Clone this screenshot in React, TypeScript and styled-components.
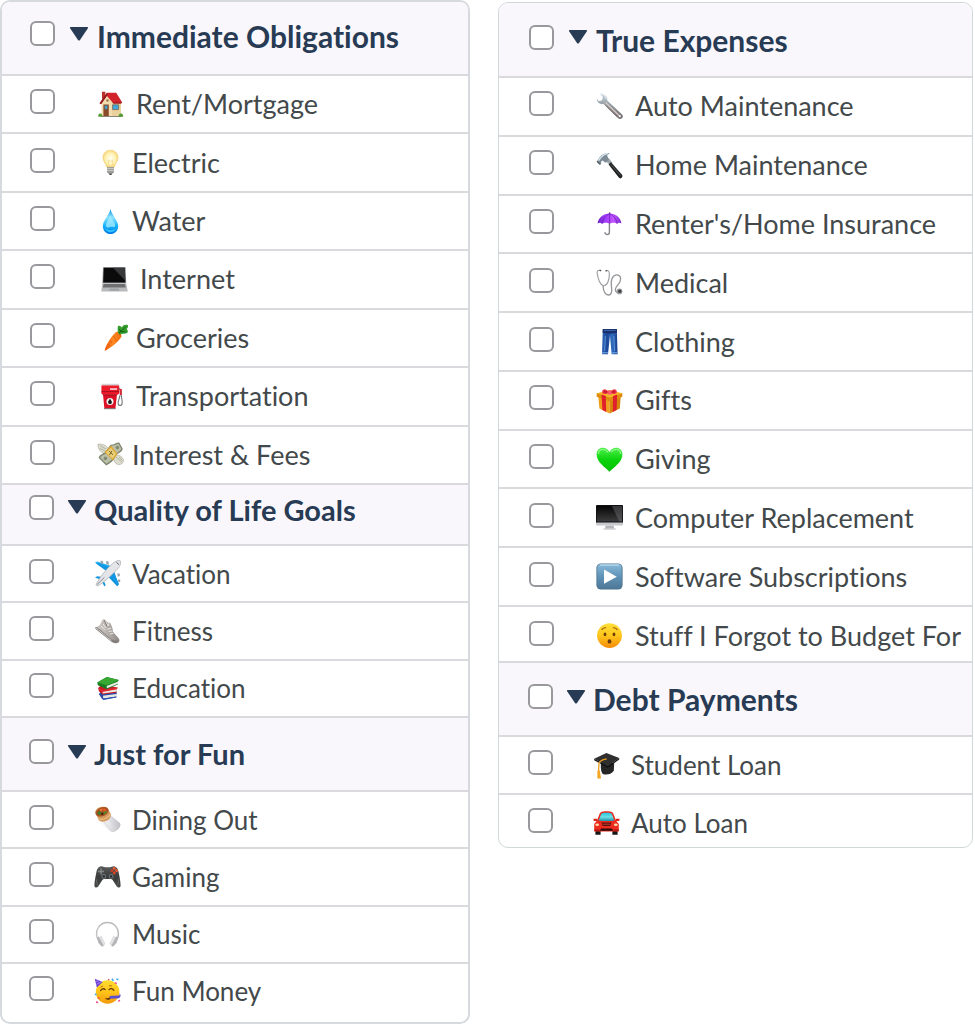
import React, { useId, useState } from "react";
import styled, { createGlobalStyle, css } from "styled-components";

const GlobalStyle = createGlobalStyle`
  *, *::before, *::after { box-sizing: border-box; }
  body {
    margin: 0;
    background: #ffffff;
    font-family: Lato, "Liberation Sans", sans-serif;
    font-variant-ligatures: none;
  }
`;

const Board = styled.main`
  display: grid;
  grid-template-columns: minmax(0, 470fr) minmax(0, 475fr);
  column-gap: 28px;
  align-items: start;
  padding-right: 2px;
`;

const Panel = styled.section<{ $offset?: boolean }>`
  overflow: hidden;
  padding-bottom: 3px;
  border: 2px solid #d6dadf;
  border-radius: 10px;
  background: #ffffff;
  ${(p) =>
    p.$offset &&
    css`
      margin-top: 2px;
      padding-bottom: 0;
      border-width: 1px;
      border-color: #d0d8da;
    `}
`;

const GroupHeader = styled.header<{ $height: number; $inset: number; $lift: number }>`
  display: flex;
  align-items: center;
  min-height: ${(p) => p.$height}px;
  padding: 0 8px ${(p) => p.$lift}px ${(p) => p.$inset}px;
  background: #f9f7fb;
`;

const CheckBox = styled.input`
  appearance: none;
  flex: none;
  width: 25px;
  height: 25px;
  margin: 0 0 5px;
  border: 2px solid #98989d;
  border-radius: 6px;
  background: #ffffff;
  cursor: pointer;

  &:checked {
    border-color: #283b54;
    background: #283b54;
    box-shadow: inset 0 0 0 4px #ffffff;
  }
`;

const Toggle = styled.button<{ $open: boolean; $compact?: boolean }>`
  flex: none;
  display: flex;
  margin: ${(p) => (p.$compact ? "0 7px 5px 13px" : "0 8px 5px 14px")};
  padding: 0;
  border: 0;
  background: none;
  cursor: pointer;

  svg {
    display: block;
    transform: rotate(${(p) => (p.$open ? 0 : -90)}deg);
  }
`;

const GroupTitle = styled.h2<{ $size: number }>`
  margin: 0;
  color: #283b54;
  font-size: ${(p) => p.$size}px;
  line-height: 36px;
  font-weight: 700;
  white-space: nowrap;
`;

const CategoryRow = styled.li<{ $inset: number }>`
  flex: 1;
  display: flex;
  align-items: center;
  padding-left: ${(p) => p.$inset}px;
  border-top: 2px solid #d9d9de;
`;

const Categories = styled.ul<{ $height: number; $tail?: number }>`
  display: flex;
  flex-direction: column;
  min-height: ${(p) => p.$height}px;
  margin: 0;
  padding: 0;
  list-style: none;

  & + header {
    border-top: 2px solid #d9d9de;
  }

  ${(p) =>
    p.$tail &&
    css`
      ${CategoryRow}:last-child {
        flex: none;
        min-height: ${p.$tail}px;
        padding-top: 3px;
      }
    `}
`;

const CategoryLabel = styled.label<{ $start: number; $gap: number; $size: number }>`
  display: flex;
  align-items: center;
  gap: ${(p) => p.$gap}px;
  padding-left: ${(p) => p.$start}px;
  color: #43494b;
  font-size: ${(p) => p.$size}px;
  line-height: 32px;
  white-space: nowrap;
  cursor: pointer;
`;

const Picture = styled.svg`
  flex: none;
  display: block;
  width: 27px;
  height: 27px;
`;

/* Gradients shared by the pictures, defined once for the page. */
const Defs = styled.svg`
  display: block;
  width: 0;
  height: 0;
`;

const Grad = ({ id, stops, flat }: { id: string; stops: string[]; flat?: boolean }) => (
  <linearGradient id={id} x1="0" y1="0" x2={flat ? "1" : "0"} y2={flat ? "0" : "1"}>
    {stops.map((c, i) => (
      <stop key={i} offset={i / (stops.length - 1)} stopColor={c} />
    ))}
  </linearGradient>
);

const Gradients = () => (
  <Defs aria-hidden="true">
    <defs>
      <Grad id="g-drop" stops={["#0b8fe0", "#8fe4ff", "#18b4fb", "#0079e8"]} />
      <Grad id="g-screen" stops={["#050505", "#3c3c3e"]} />
      <Grad id="g-steel" stops={["#c9d6df", "#8d969c", "#6f6668"]} />
      <Grad id="g-umbrella" flat stops={["#6a22c4", "#a63cff", "#c455ff", "#7a28d0"]} />
      <Grad id="g-jeans" flat stops={["#2a62b5", "#1c4798", "#2f6cc0", "#173c88"]} />
      <Grad id="g-heart" stops={["#4df04a", "#0bd30d", "#00c000"]} />
      <Grad id="g-play" stops={["#8bbad8", "#5f93b8", "#4f7896"]} />
      <Grad id="g-face" stops={["#ffe03a", "#ffc61c", "#f58a06"]} />
      <Grad id="g-party" stops={["#ffdc30", "#ffc41a", "#f39a0a"]} />
      <Grad id="g-foil" flat stops={["#ffffff", "#e9e9ec", "#bcbcc2"]} />
      <Grad id="g-glass" stops={["#20c5de", "#6fe0e6", "#1794ae"]} />
      <Grad id="g-carrot" flat stops={["#f0560a", "#ff8a24", "#f26a0c"]} />
      <Grad id="g-shoe" flat stops={["#d3cfcc", "#b6b0ac", "#8d8682"]} />
      <Grad id="g-pad" stops={["#5a5c5b", "#3a3c3c", "#484a49"]} />
      <Grad id="g-plane" stops={["#27b4f2", "#0a86d4"]} />
      <radialGradient id="g-bulb" cx="0.5" cy="0.5" r="0.55">
        <stop offset="0" stopColor="#fffef2" />
        <stop offset="0.6" stopColor="#fff2b4" />
        <stop offset="1" stopColor="#f5cf6a" />
      </radialGradient>
    </defs>
  </Defs>
);

const pictures: Record<string, React.ReactNode> = {
  house: (
    <>
      <path d="M5 0.8h3.4v7H5z" fill="#b8322c" />
      <path d="M4.5 12 10 5l6-2 8 9v13H4.5z" fill="#f3dcae" />
      <path d="M15 10h8.8v15H15z" fill="#ead09c" />
      <path d="M2.6 12.2 10 1.8h9.2l6 9.6-1.2 1.2h-7.6L10 5 4 13.2z" fill="#d3232a" />
      <path d="M2.6 12.2 10 1.8l1 1.2L4 13.2zM16.4 12.6h7.6l1.2-1.2h-9.6z" fill="#8e1b20" />
      <path d="M6.4 13.4h5.4v11.8H6.4z" fill="#8a4a2a" />
      <path d="M7.6 14.6h3v3.6h-3zM15.6 13.8h6v4.8h-6z" fill="#43a7df" stroke="#6d5a48" strokeWidth="0.7" />
      <path d="M9.5 8.5h2v2h-2z" fill="#8a5a3a" />
      <path d="M4 25h20.5v0.9H4z" fill="#8a8378" />
      <path d="M1.2 25.8q0-3.4 2.2-3.2 2 .2 2 3.2zM21.6 25.8q.2-3.6 2.4-3.2 2.2 0 2.2 3.2z" fill="#559a35" />
    </>
  ),
  bulb: (
    <>
      <path d="M13.5 1.2c-4.4 0-7.5 3.2-7.5 7.4 0 3.8 2.8 5.6 3.6 9.4h7.8c.8-3.8 3.6-5.6 3.6-9.4 0-4.2-3.1-7.4-7.5-7.4z" fill="url(#g-bulb)" stroke="#f2d27c" strokeWidth="0.8" />
      <path d="M11.5 17.5V11l2 1.5 2-1.5v6.5" fill="none" stroke="#f0d88e" strokeWidth="0.7" />
      <path d="M10 18h7v5.2l-1.6 1.6h-3.800L10 23.2z" fill="#9b9b98" />
      <path d="M10 19.4h7M10 21.4h7" stroke="#d9d9d5" strokeWidth="0.8" />
      <path d="M12 24.4h3l-.6 1.6h-1.8z" fill="#454545" />
    </>
  ),
  drop: (
    <>
      <path d="M13.5 1C12.4 7 5.8 12.2 5.8 18.2c0 4.4 3.4 7.8 7.7 7.8s7.7-3.4 7.7-7.8C21.2 12.2 14.6 7 13.5 1z" fill="url(#g-drop)" />
      <path d="M13.4 7c-.8 4-4.4 7.4-4.4 10.4 0 1.8 1.6 2.4 3.4 1.8 2.4-.8 3.8.2 5.4-.4 1.8-3-3.6-7-4.4-11.8z" fill="#a9ecff" opacity="0.75" />
      <path d="M8 19.5c.6 3 3 4.7 5.6 4.7 2.8 0 5-1.8 5.4-4.7-1.6 3.4-9 3.6-11 0z" fill="#35c4ff" />
    </>
  ),
  laptop: (
    <>
      <path d="M2 1.2h22.6l.6 16H1.4z" fill="#8b8d90" />
      <path d="M2.8 1.8h21l.5 14.6H2.2z" fill="#0b0b0c" />
      <path d="M12 1.8h11.8l.5 13z" fill="#38393b" />
      <path d="M1.4 17.2h23.8l1.600 8.400H.200z" fill="#b9babc" />
      <path d="M2.6 18h21.4l.7 3.6H1.9z" fill="#6e7072" />
      <path d="M8.8 22.4h9l.4 2.4H8.4z" fill="#9fa1a3" />
    </>
  ),
  carrot: (
    <>
      <path d="M16.4 7.6c2.4.4 4.4 2.6 4 5.2-2.4 4.6-10.8 11.2-15.6 13.6-.8.2-1.4-.2-1-1C6 19.6 11.6 9.6 16.4 7.6z" fill="url(#g-carrot)" />
      <path d="M12 12.4l2.2 1.6M9 17l2 1.4M15.5 16.6l-1.6-1.4M7.2 20.6l1.4 1M18 10l1.4 1" stroke="#c94c06" strokeWidth="0.7" />
      <path d="M17 8.8c-.2-2.4-.6-5 0-6.8 1.6-.8 3 .2 3.8 1.4C22 1 24.4.4 26.6 1c1 1.2.4 3-1 4 1.4 1 1.6 2.6.6 4-2 .8-5.6.8-7.6 1.6z" fill="#349d2e" />
      <path d="M18 9l6.6-6M18.4 5l1.4 2.6 4.6.2" fill="none" stroke="#14620f" strokeWidth="1" />
    </>
  ),
  pump: (
    <>
      <path d="M4.8 0.8h17v2.400h-17z" fill="#d6d2d2" />
      <path d="M4.400 2.400h17.8v8l-1.4 1.4H5.6l-1.2-1.4z" fill="#ee1b2b" />
      <path d="M6 11.6h14l-1.600 14.2H7.4z" fill="#db1225" />
      <path d="M4.6 8.600h17.400M6.2 12h13.4" stroke="#8f0c18" strokeWidth="0.8" />
      <path d="M13 5.400h7v1.300h-7z" fill="#ffffff" />
      <circle cx="13" cy="18.4" r="3.5" fill="#f4f4f4" />
      <path d="M13 15.4c-.5 1.6-1.9 2.2-1.9 3.8a1.9 1.9 0 0 0 3.8 0c0-1.6-1.4-2.2-1.9-3.8z" fill="#191919" />
      <path d="M21.6 5.4c3 0 2.4 4.2 2.6 6.6.3 4 1.6 6.4.8 9-.6 2-3.2 2-3.8 0-.8-2.6 1.4-4.6 1.6-8.6" fill="none" stroke="#737577" strokeWidth="1.1" />
      <path d="M22.4 6h2.4v6h-2z" fill="#d9283a" />
      <path d="M7 25.2h11.6v1H7z" fill="#777777" />
    </>
  ),
  money: (
    <>
      <path d="M.8 3.2c4-.6 8.4.8 11 4.6l-3.6 5C4.4 12 1.2 9.4.8 3.2z" fill="#dcdccf" stroke="#a9aa98" strokeWidth="0.6" />
      <path d="M17.2 14.4c4-1 8.2.4 9.4 5-.4 2.6-2 4.2-5.2 4.2-3.2-.6-5.6-4-4.2-9.2z" fill="#dcdccf" stroke="#a9aa98" strokeWidth="0.6" />
      <path d="M3 4.6 9 8M2.6 7.2l5.8 3M19 16l5.8 5M22 16l3.4 3.4" stroke="#a3a493" strokeWidth="0.7" />
      <path d="M13.4 3.8c3.4.4 5.4-2.4 8.8-2.2l3.6 6.2c-1 4-5.4 4.2-7.2 7.4-1.6 4-4.6 6.6-9.4 9.4L1.6 16.8c1-3.4 4-3.6 6.8-5.8z" fill="#7e8570" />
      <path d="M14.4 4.8c2.8.2 4.8-2 7.2-1.8l2.8 4.8c-1.2 2.8-4.6 3.4-6.4 6.2-1.6 3.8-4.4 6.2-8.6 8.8L3.2 16.6c1-2.2 3.6-2.6 6-4.4z" fill="#bcc0a9" />
      <path d="M7.4 11.2 14 4.6l6.6 8.2-4.6 6.6z" fill="#dba83a" />
      <path d="M9 11.8l5-5 5 6-3.4 4.6z" fill="#e8cf7a" />
      <path d="M12.2 10.2l3.8 3.6M15 9.8l-2.6 4.2" stroke="#7b6328" strokeWidth="1" />
      <circle cx="20.4" cy="6.6" r="1.8" fill="#828a72" />
      <circle cx="8.4" cy="17.4" r="1.8" fill="#828a72" />
    </>
  ),
  plane: (
    <>
      <path d="M1 2.8 3 1.4l16 5-4.2 5zM19.8 13.2l5.2 11-1.8 2-8.6-9z" fill="url(#g-plane)" />
      <path d="M5 3.200l13 5-4 4-12-8.600zM20.400 12l4 11.600-1.600 1.600-7-11z" fill="#1297e4" />
      <path d="M1 17.600l2.200-1.400 8 1-2.200 3.400zM8.600 18l3 7-1.200 1.600-3.400-6.600z" fill="#1496df" />
      <path d="M6.6.6l2.4.6.2 2.6-2.6-.6zM12.2 1l2.4.6.2 3.2-2.6-.8zM25.8 13.4l-2.6.2.6 3.2 2-.8zM26.2 19.4l-2.4.2.6 2.8 1.8-.6z" fill="#9aa2a8" />
      <path d="M26.2.8c1.2 3-.4 6.2-4 9.600C16 16.600 8 24 3.400 26 2.200 26 1.800 25 2.600 23.400 5 18.600 11.600 9.800 17.400 4.600 20.800 1.600 23.800-.2 26.200.800z" fill="#e3e5e8" stroke="#a4a8ad" strokeWidth="0.7" />
      <path d="M22.4 2.2l2.6 2.4" stroke="#54616c" strokeWidth="1" />
      <path d="M3 24.6l7.4-7.2" stroke="#7c8186" strokeWidth="0.9" />
    </>
  ),
  shoe: (
    <>
      <path d="M2 10.4 6 7.8 8.4 3c.6-1 1.4-1 2.2-.4l4 3.4 1.4-.6c1.6 3.2 2.6 5 3.2 9.6l5.2 6c1.2 1.4 1.4 3 .4 4.2-1.6.8-4 .2-6-1.2z" fill="url(#g-shoe)" />
      <path d="M1.4 10.4c.4-.6 1-.6 1.6-.2 5.4 3.4 9.4 8.4 14.6 12 2 1.2 4.4 1.6 6.6 1.2.6 1.6-.4 2.8-2 2.8-3 0-5-1.4-7-3.2L2.2 12.4c-.8-.6-1-1.4-.8-2z" fill="#827d7a" />
      <path d="M2 11c5.4 3.6 9.8 9 15.4 12.4" fill="none" stroke="#e6e3e1" strokeWidth="0.8" />
      <path d="M10.4 3.2l3.8 5.6 1-2.4M13.2 12.4l4-1.2M14.6 14.6l4-.8M16 17l3.4-.6M7 9l4.4 4M9 7l3 4" fill="none" stroke="#f0eeec" strokeWidth="0.9" />
      <path d="M10.2 3l2.6 6.2" stroke="#77716d" strokeWidth="0.9" />
    </>
  ),
  books: (
    <g transform="translate(1.200 0) scale(0.920 0.940)">
      <path d="M4 20.2 6.8 17l17 .4-1 1.6v4.6L8.6 26.2 7 25z" fill="#2c4da0" />
      <path d="M8.4 21.4l14.8-1.6v3L8.8 25z" fill="#e8e8e2" />
      <path d="M6.6 20.4l17-1.6-.4 1.4-15 1.8zM8.4 25.2l14.8-2.4v1.2L8.6 26.6z" fill="#2450b4" />
      <path d="M3.4 13.6 7 10l17.4 3.4-1.2 1.8v3.6L8 20.8 4 17.4z" fill="#c91c26" />
      <path d="M8 17.2l15.6-2.4v2.8L8.2 19.8z" fill="#eeeae4" />
      <path d="M3.4 13.6 8 16.4l16.4-3-.6 1.8L8 18l-4.2-2.6z" fill="#e42c33" />
      <path d="M2.2 8 12.6 2l13 3.4-1 1.4v3.4l-12.2 5L3 10.8z" fill="#177c22" />
      <path d="M12.4 11.600 24.8 7v2.2l-12 4.8z" fill="#ebeee4" />
      <path d="M2.2 8 12.6 2l13 3.4-13 5.4z" fill="#38a832" />
    </g>
  ),
  burrito: (
    <>
      <path d="M14.8 7.6 3.4 13.4 15.6 25c1.4 1.4 3.6 1.4 5.4.4 2.8-1.4 4.8-3.4 5.4-6 .2-1-.2-2-.8-2.6z" fill="url(#g-foil)" />
      <path d="M8 13.2 18.6 25.6M12.4 11l12 11M15 9.8l10.6 9" stroke="#cfcfd4" strokeWidth="0.7" />
      <path d="M1.4 6.6C1 4 4 1.2 7.8.8c3.2-.4 5.8.6 6.4 2.4L17 8.4c0 3.2-2.2 5.6-5.6 6.8-3 1-6 .4-7-1.6z" fill="#d49a5c" />
      <ellipse cx="8" cy="5.8" rx="6.8" ry="4.4" transform="rotate(-22 8 5.8)" fill="#a75425" />
      <path d="M3 7.4l2.6-3 2 2.6-1.6 2.2z" fill="#3f7a24" />
      <path d="M8 3l3-.8 1.4 2-2.4 1z" fill="#e65a1f" />
      <path d="M9 6.8l3-1.8 1 1.4-3 2.2z" fill="#4a8b2c" />
      <path d="M5.6 3.4l1.8-.8.8 2-1.8.6z" fill="#f07a34" />
      <path d="M7 7.4l2-1 .6 1.6-2 1.2z" fill="#35190c" />
      <path d="M4 12.6c4 1.8 10 .2 12.8-5" fill="none" stroke="#eabd83" strokeWidth="1.2" />
    </>
  ),
  gamepad: (
    <>
      <path d="M6.2 3.4c2.2-.6 3.6.6 5 .8h4.6c1.4-.2 2.8-1.4 5-.8 2.8.8 3.4 3.4 4 6.6.8 4.4 1.8 9 1.8 12.4 0 2.4-2.4 2.8-3.8 1l-4-6.2c-.8-1-1.6-1.2-2.6-1.2h-5.4c-1 0-1.8.2-2.6 1.2l-4 6.2c-1.4 1.8-3.8 1.4-3.8-1C.4 19 1.4 14.4 2.2 10c.6-3.2 1.2-5.8 4-6.6z" fill="url(#g-pad)" />
      <path d="M2 15.6l1.4 6.6M25 15.6l-1.4 6.6" stroke="#656766" strokeWidth="1" />
      <path d="M7 5.4v6M4 8.4h6" stroke="#858786" strokeWidth="1.5" />
      <circle cx="9.8" cy="13.4" r="2.4" fill="#6c7478" />
      <circle cx="17.2" cy="13.4" r="2.4" fill="#6c7478" />
      <circle cx="9.8" cy="13.4" r="1.2" fill="#262828" />
      <circle cx="17.2" cy="13.4" r="1.2" fill="#262828" />
      <circle cx="20.2" cy="5.4" r="1.4" fill="#f0572f" />
      <circle cx="20.2" cy="10" r="1.4" fill="#e84020" />
      <circle cx="22.6" cy="7.7" r="1.4" fill="#f0572f" />
      <circle cx="17.9" cy="7.7" r="1.4" fill="#cf3a1e" />
    </>
  ),
  headphones: (
    <>
      <path d="M5.2 20.4C1.8 16.4 1.6 9.8 5 5.6c4.4-5.4 12.6-5.4 17 0 3.4 4.2 3.2 10.8-.2 14.8" fill="none" stroke="#b8b9bc" strokeWidth="1.5" />
      <path d="M5.2 20C2.6 16 2.4 10 5.6 6" fill="none" stroke="#f0f0f2" strokeWidth="0.7" />
      <path d="M3 16.6l1.8-1.2 4.8 8.8c.2 1-1 1.8-1.8 1.2L4.4 22zM24 16.6l-1.8-1.2-4.8 8.8c-.2 1 1 1.8 1.8 1.2l3.4-3.4z" fill="#b4b5b8" />
      <path d="M5.4 16.2l2-.8 3.6 7.4-1.4 1.6zM21.6 16.2l-2-.8-3.6 7.4 1.4 1.6z" fill="#e7e7ea" stroke="#c2c3c6" strokeWidth="0.5" />
    </>
  ),
  party: (
    <>
      <circle cx="13.6" cy="14" r="11.8" fill="url(#g-party)" />
      <path d="M.8.8 8.600 4 2.800 9.600z" fill="#6a3fd0" />
      <path d="M2 3.4l3.400-.8M2.4 6.400l4.600-2.400" stroke="#a987f5" strokeWidth="1" />
      <path d="M6.6 12.6c1-2 3.2-2.4 4.6-1M15 11.6c1.4-1.4 3.6-1.2 4.8.8" fill="none" stroke="#6b3c0a" strokeWidth="1.3" strokeLinecap="round" />
      <path d="M6.4 9.4l2.6-1.6M15 7.6l3 .4" stroke="#b8700e" strokeWidth="1" />
      <path d="M11 19.4c1.8 1.4 4.2 1 5.4-.6l.4 1.4c-1 2.2-4.4 2.6-5.8-.8z" fill="#6b3c0a" />
      <path d="M15.6 18l8.8-.4c1.4-.4 1.6-1.8.6-2.4 2 .4 2.2 4-.2 5l-8.8.6z" fill="#5b4fd4" />
      <path d="M18 .6l1.4 2.2M22.4 1l2 .6M1 15.8l1.4 1.2" stroke="#35a8ee" strokeWidth="1.5" />
      <path d="M20.8 4.6l2 1M2 24l2.2.4M24.4 23.6l1.4-1.6" stroke="#f0488c" strokeWidth="1.5" />
      <path d="M3.8 19.6l1.8.8M14 1.4l1.4.4" stroke="#ea4a53" strokeWidth="1.4" />
    </>
  ),
  wrench: (
    <>
      <path d="M3.8.8 7 4.2 5.8 7.4 2.4 8 .8 5.2C.4 9 3.4 11.8 7.4 11L22 25c1.4 1.4 3.4 1.2 4.4-.2.8-1.2.6-2.6-.6-3.6L11.2 7.4C12 3.4 8 .2 3.8.8z" fill="url(#g-steel)" />
      <path d="M9.6 9.6 23 22.4" stroke="#d9c8c4" strokeWidth="1.4" />
      <path d="M10 12.6 21 23.6" stroke="#7a5f5d" strokeWidth="0.8" />
      <circle cx="23.8" cy="23.2" r="1.1" fill="#f7f7f7" />
      <path d="M4.4 1.2c3-.2 5.6 2 5.8 5" fill="none" stroke="#edf3f6" strokeWidth="0.9" />
    </>
  ),
  hammer: (
    <>
      <path d="M10 9.4l3-2.8 3.4 4.4-2.4 2z" fill="#9aa4aa" />
      <path d="M12.6 12.4l2.400-2.200 10.800 12.400c1 1.2.8 2.400-.2 3.2-1 .8-2 .8-2.800-.2z" fill="#1f2122" />
      <path d="M14.8 12.4l9.6 11" stroke="#606466" strokeWidth="0.8" />
      <path d="M.8 9.6 3.2 6C5.4 2.4 9 .8 14 1c-2 1-3.2 2.2-2.6 3.6l1.8 3-3.6 3.2-3.2-2.2-1.2 1-.2 2.600-1.2.6z" fill="#7c8b95" />
      <path d="M2.6 8.6 5 5.4C7 3 9.2 1.8 12 1.6" fill="none" stroke="#d7e6ee" strokeWidth="1.4" />
      <path d="M1 9.4l3.2 3" stroke="#4a5359" strokeWidth="1.2" />
    </>
  ),
  umbrella: (
    <>
      <path d="M13.4 12v10.4c0 2.8-4.4 2.8-4.4.2" fill="none" stroke="#88858e" strokeWidth="1.4" strokeLinecap="round" />
      <path d="M13.2 2.2h1v2h-1z" fill="#4c3366" />
      <path d="M1.6 13.6C2 7.8 7.2 3.4 13.6 3.4S25 7.8 25.4 13.6c-1.2-1-3-1-4.2.2-1.4-1.4-5.4-1.6-7.6 0-2.2-1.6-6-1.4-7.6 0-1.2-1.2-3.2-1.2-4.4-.2z" fill="url(#g-umbrella)" />
      <path d="M13.6 3.6c-4 1.6-6.6 5.6-7.6 10M13.6 3.6c4 1.6 6.6 5.6 7.6 10M13.6 3.6v10" fill="none" stroke="#5e1fae" strokeWidth="0.7" />
    </>
  ),
  stethoscope: (
    <>
      <path d="M4.2 1.4C1.6.8.8 2.6 1.2 4.6 2 9.4 3.4 15 7 16.6 11.4 17.6 13.4 10.6 13.4 5c0-2.4-1-3.8-3.2-3.4" fill="none" stroke="#9a9c9f" strokeWidth="1.1" />
      <path d="M7 16.8c.4 4.8 1.8 9.2 5.4 9.2 3.8 0 3.6-4.6 3-9.2-.6-5 .6-10.6 5-11 4.2-.2 5.2 3.8 3.4 7.4-1.6 2.8-4.4 4.4-4.4 7.4 0 1.8 1 2.8 2.4 3" fill="none" stroke="#939598" strokeWidth="1.3" />
      <circle cx="23.4" cy="22.4" r="2.9" fill="#9c9ea1" />
      <circle cx="23.8" cy="22.2" r="1.7" fill="#424548" />
      <path d="M3.6 1l1.6.8M9.6 2.2l1.4-1" stroke="#4f5154" strokeWidth="1.3" />
    </>
  ),
  jeans: (
    <>
      <path d="M6.8 1h14l.8 25.2h-6L14 7.6 12 26.2H6z" fill="url(#g-jeans)" />
      <path d="M6.8 1h14l.2 3.8-7 1-7.4-1z" fill="#17306f" />
      <path d="M8 2.4h11.6" stroke="#4a78bf" strokeWidth="0.8" />
      <path d="M9.4 8 8.6 23M17.8 8l.8 15" stroke="#5b93d6" strokeWidth="1" />
      <path d="M6 24.8h6M15.6 24.8h6" stroke="#7fb0e6" strokeWidth="1" />
    </>
  ),
  gift: (
    <>
      <path d="M2.2 8.8 13.6 13v13.6L3.4 21.4z" fill="#f0a01c" />
      <path d="M24.8 8.8 13.6 13v13.6l10.2-5.2z" fill="#d9850c" />
      <path d="M.8 6.2 13.6 3l12.6 3.2v3.6L13.6 14.4.8 9.8z" fill="#f7b62a" />
      <path d="M.8 6.2 13.6 10.6 26.2 6.2v3.6L13.6 14.4.8 9.8z" fill="#dd8c10" />
      <path d="M5.6 7.6 9.8 9l.4 16L6.4 23zM21.2 7.6 17 9l-.2 16 3.8-2z" fill="#e0202c" />
      <path d="M12.8 5.4C9 7.8 5.8 7.4 6.2 4.6 6.2 1.8 9.8.6 12.8 5.4zM14 5.4c3.6 2.4 7 2 6.8-.8C20.8 1.8 17 .6 14 5.4z" fill="#f02f48" />
      <path d="M8 4.8l3.6.4M15.4 5.2l3.6-.4" stroke="#9c1020" strokeWidth="1" />
      <path d="M11.6 3.4h3.8l.4 4.2h-4.4z" fill="#f9576b" />
    </>
  ),
  heart: (
    <>
      <path d="M13.5 25.8C10 21.6.6 16.4.6 8.4.6 4.4 3.4 1.8 6.8 1.8c3 0 5.4 1.6 6.7 4.4 1.3-2.8 3.7-4.4 6.7-4.4 3.4 0 6.2 2.6 6.2 6.6 0 8-9.4 13.2-12.9 17.4z" fill="url(#g-heart)" />
      <path d="M2.4 7.4c.4-2.6 2.2-4 4.4-4 2 0 3.6.8 4.8 2.4M15.6 5.6c1.2-1.4 2.8-2.2 4.6-2.2 2.2 0 4 1.4 4.4 4" fill="none" stroke="#8bfa84" strokeWidth="1.3" strokeLinecap="round" />
    </>
  ),
  monitor: (
    <>
      <path d="M9.6 21.4h8l.6 3.4H9z" fill="#b4b6b9" />
      <path d="M7.4 24.4h12.4v1.3H7.4z" fill="#c9cbce" />
      <rect x="0" y="1" width="27" height="20.4" rx="1" fill="#c7c9cc" />
      <path d="M0 2q0-1 1-1h25q1 0 1 1v16.4H0z" fill="#101112" />
      <path d="M.9 1.9h25.2v15.6H.9z" fill="url(#g-screen)" />
      <path d="M16 1.9h10.1v15.6h-3z" fill="#707275" opacity="0.45" />
    </>
  ),
  play: (
    <>
      <rect x="0.4" y="0.4" width="26.2" height="26.2" rx="4.6" fill="#4c7593" />
      <rect x="1.3" y="1" width="24.4" height="24.4" rx="4" fill="url(#g-play)" />
      <path d="M4.4 2.2h18.2" stroke="#b7d7ea" strokeWidth="1.2" strokeLinecap="round" />
      <path d="M8 6.6v14.2L20.8 13.7z" fill="#ffffff" />
    </>
  ),
  hushed: (
    <>
      <circle cx="13.5" cy="13.6" r="12.4" fill="url(#g-face)" />
      <ellipse cx="9" cy="12.4" rx="1.4" ry="1.800" fill="#6b3b08" />
      <ellipse cx="18" cy="12.4" rx="1.4" ry="1.800" fill="#6b3b08" />
      <ellipse cx="13.5" cy="19.4" rx="1.900" ry="2.200" fill="#6b3b08" />
      <path d="M5.8 7.6c1-1.4 2.4-2 4-1.8M17.2 5.8c1.6-.2 3 .4 4 1.8" fill="none" stroke="#9b6410" strokeWidth="1.1" strokeLinecap="round" />
    </>
  ),
  gradcap: (
    <>
      <path d="M8 10.2l13.2 1-.4 7.6c-2.8 3.8-7.4 4.4-11 3.2C7.6 19.4 7.6 14 8 10.2z" fill="#252526" />
      <path d="M1.2 6.8 13.4 1l12.8 5-11.4 8.4z" fill="#2f2f30" />
      <path d="M1.2 6.8l13.6 7.6L26.2 6v1.4l-11.4 8.4L1.2 8.2z" fill="#0e0e0f" />
      <path d="M13.6 7c-3 .2-6 1.8-7.6 3.8L5.6 19" fill="none" stroke="#e99b1d" strokeWidth="1.3" />
      <path d="M4.4 18.4h2.4l1.2 8-3.6.2z" fill="#f5a623" />
    </>
  ),
  car: (
    <>
      <path d="M2.4 20.4h5.2v5.4H2.4zM19.4 20.4h5.2v5.4h-5.2z" fill="#171717" />
      <path d="M4 11.6 6.6 4.8C7 3.4 8.4 2.6 10 2.4c2.4-.3 4.8-.3 7 0 1.8.2 3 1 3.4 2.4l2.6 6.8 2.8 3.4v7.4H1.2V15z" fill="#ec2a1e" />
      <path d="M5.6 11.4 8 5.4c.2-.8 1-1.2 2-1.4 2.4-.3 4.6-.3 7 0 1 .2 1.8.6 2 1.4l2.4 6c-5 .9-10.8.9-15.8 0z" fill="url(#g-glass)" />
      <path d="M.4 9.8h3.8v2.2H.8zM22.8 9.8h3.8l-.4 2.2h-3.4z" fill="#dc2318" />
      <ellipse cx="4.2" cy="15.8" rx="1.9" ry="1.3" fill="#ffd9a6" />
      <ellipse cx="22.8" cy="15.8" rx="1.9" ry="1.3" fill="#ffd9a6" />
      <path d="M8.6 13.6h9.8l-1.2 3.4H9.8z" fill="#5f0f0a" />
      <path d="M10 15.2h7" stroke="#c5534a" strokeWidth="0.8" />
      <path d="M8 19.6h11l1 2.2H7z" fill="#2b0b08" />
      <path d="M1.2 20.4h5.2v1.4H1.2zM20.6 20.4h5.2v1.4h-5.2z" fill="#a3160e" />
    </>
  ),
};

type Item = { name: string; icon: string; shift?: number; gap?: number };
type Group = {
  title: string;
  titleSize: number;
  compact?: boolean;
  headerHeight: number;
  lift?: number;
  inset: number;
  iconStart: number;
  gap: number;
  textSize: number;
  listHeight: number;
  tail?: number;
  items: Item[];
};

const leftGroups: Group[] = [
  {
    title: "Immediate Obligations",
    titleSize: 30,
    headerHeight: 72,
    lift: 4,
    inset: 28,
    iconStart: 42,
    gap: 8,
    textSize: 27,
    listHeight: 409,
    items: [
      { name: "Rent/Mortgage", icon: "house", gap: 12 },
      { name: "Electric", icon: "bulb" },
      { name: "Water", icon: "drop" },
      { name: "Internet", icon: "laptop", shift: 4, gap: 12 },
      { name: "Groceries", icon: "carrot", shift: 4 },
      { name: "Transportation", icon: "pump", gap: 12 },
      { name: "Interest & Fees", icon: "money" },
    ],
  },
  {
    title: "Quality of Life Goals",
    titleSize: 29,
    compact: true,
    headerHeight: 61,
    lift: 10,
    inset: 27,
    iconStart: 40,
    gap: 11,
    textSize: 26,
    listHeight: 172,
    items: [
      { name: "Vacation", icon: "plane" },
      { name: "Fitness", icon: "shoe" },
      { name: "Education", icon: "books" },
    ],
  },
  {
    title: "Just for Fun",
    titleSize: 29,
    compact: true,
    headerHeight: 74,
    inset: 27,
    iconStart: 40,
    gap: 11,
    textSize: 26,
    listHeight: 229,
    items: [
      { name: "Dining Out", icon: "burrito" },
      { name: "Gaming", icon: "gamepad" },
      { name: "Music", icon: "headphones" },
      { name: "Fun Money", icon: "party" },
    ],
  },
];

const rightGroups: Group[] = [
  {
    title: "True Expenses",
    titleSize: 30,
    headerHeight: 73,
    inset: 30,
    iconStart: 42,
    gap: 12,
    textSize: 27,
    listHeight: 585,
    tail: 56,
    items: [
      { name: "Auto Maintenance", icon: "wrench" },
      { name: "Home Maintenance", icon: "hammer" },
      { name: "Renter's/Home Insurance", icon: "umbrella" },
      { name: "Medical", icon: "stethoscope" },
      { name: "Clothing", icon: "jeans" },
      { name: "Gifts", icon: "gift" },
      { name: "Giving", icon: "heart" },
      { name: "Computer Replacement", icon: "monitor" },
      { name: "Software Subscriptions", icon: "play" },
      { name: "Stuff I Forgot to Budget For", icon: "hushed" },
    ],
  },
  {
    title: "Debt Payments",
    titleSize: 30,
    compact: true,
    headerHeight: 74,
    inset: 29,
    iconStart: 40,
    gap: 11,
    textSize: 26,
    listHeight: 112,
    tail: 54,
    items: [
      { name: "Student Loan", icon: "gradcap" },
      { name: "Auto Loan", icon: "car" },
    ],
  },
];

const CategoryItem = ({ item, group }: { item: Item; group: Group }) => {
  const id = useId();
  return (
    <CategoryRow $inset={group.inset}>
      <CheckBox type="checkbox" id={id} />
      <CategoryLabel
        htmlFor={id}
        $start={group.iconStart + (item.shift ?? 0)}
        $gap={item.gap ?? group.gap}
        $size={group.textSize}
      >
        <Picture viewBox="0 0 27 27" aria-hidden="true">
          {pictures[item.icon]}
        </Picture>
        {item.name}
      </CategoryLabel>
    </CategoryRow>
  );
};

const CategoryGroup = ({ group }: { group: Group }) => {
  const id = useId();
  const [open, setOpen] = useState(true);
  return (
    <>
      <GroupHeader $height={group.headerHeight} $inset={group.inset} $lift={group.lift ?? 0}>
        <CheckBox type="checkbox" id={id} />
        <Toggle
          type="button"
          $open={open}
          $compact={group.compact}
          aria-expanded={open}
          aria-label={"Toggle " + group.title}
          onClick={() => setOpen(!open)}
        >
          <svg width="20" height="14" viewBox="0 0 20 14" aria-hidden="true">
            <path d="M1.6 0h16.8q1 .4.5 1.3L11 13q-1 1.2-2 0L1.1 1.3Q.6.4 1.6 0z" fill="#283b54" />
          </svg>
        </Toggle>
        <GroupTitle $size={group.titleSize}>
          <label htmlFor={id}>{group.title}</label>
        </GroupTitle>
      </GroupHeader>
      <Categories $height={open ? group.listHeight : 0} $tail={group.tail}>
        {open && group.items.map((item) => <CategoryItem key={item.name} item={item} group={group} />)}
      </Categories>
    </>
  );
};

export default function App() {
  return (
    <>
      <GlobalStyle />
      <Gradients />
      <Board>
        <Panel>
          {leftGroups.map((g) => (
            <CategoryGroup key={g.title} group={g} />
          ))}
        </Panel>
        <Panel $offset>
          {rightGroups.map((g) => (
            <CategoryGroup key={g.title} group={g} />
          ))}
        </Panel>
      </Board>
    </>
  );
}
